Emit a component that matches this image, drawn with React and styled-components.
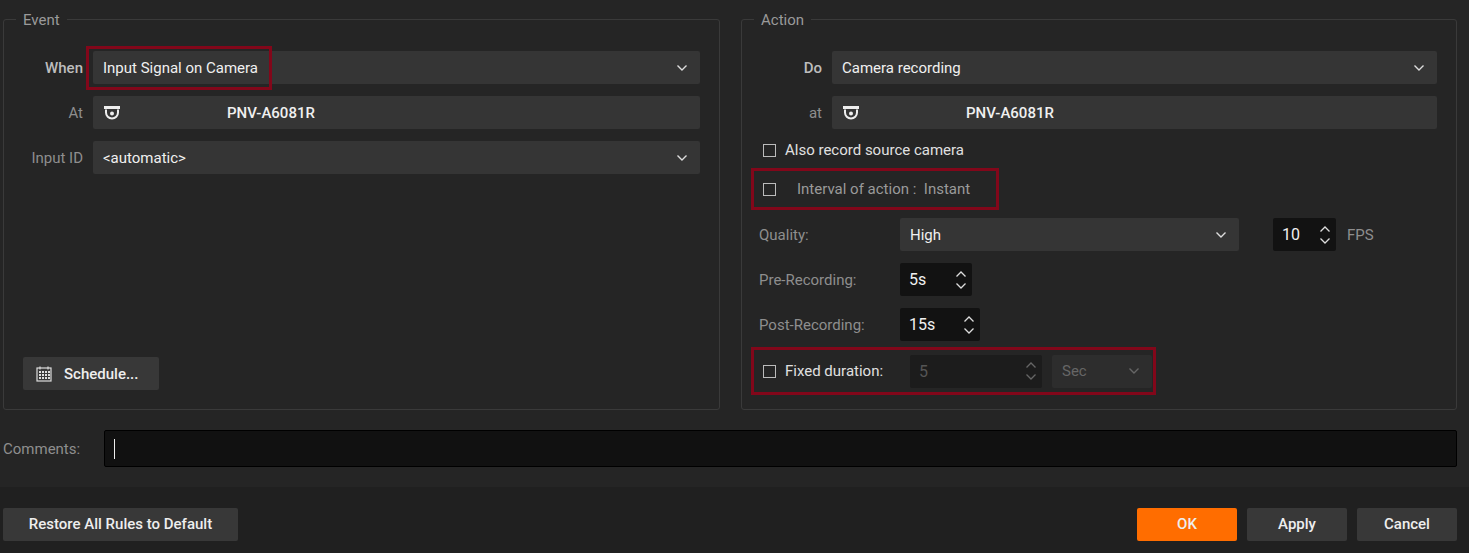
import React from "react";
import styled, { createGlobalStyle } from "styled-components";

const Global = createGlobalStyle`
  body { margin: 0; background: #252525; font-family: Roboto, "Liberation Sans", sans-serif; }
`;

const Chevron = ({ color = "#ddd" }) => (
  <svg width="12" height="8" viewBox="0 0 12 8"><path d="M1.5 1.5 6 6l4.5-4.5" fill="none" stroke={color} strokeWidth="1.4" /></svg>
);

const CameraIcon = () => (
  <svg width="18" height="16" viewBox="0 0 18 16">
    <rect x="1" y="1" width="16" height="3" fill="#eee" />
    <path d="M3 4.5v3a6 6 0 0 0 12 0v-3" fill="none" stroke="#eee" strokeWidth="2" />
    <circle cx="9" cy="8.5" r="2" fill="#eee" />
  </svg>
);

const CalendarIcon = () => (
  <svg width="18" height="18" viewBox="0 0 18 18" fill="none" stroke="#ddd" strokeWidth="1.2">
    <rect x="2" y="3" width="14" height="13" />
    <path d="M5 1.5v3M13 1.5v3" />
    <g fill="#ddd" stroke="none">
      {[6, 9, 12].map((y) => [5, 8, 11, 14].map((x) => <rect key={x + "-" + y} x={x - 1} y={y} width="2" height="2" />))}
    </g>
  </svg>
);

const SpinArrows = ({ dim }) => (
  <Arrows>
    <svg width="12" height="8" viewBox="0 0 12 8"><path d="M1.5 6.5 6 2l4.5 4.5" fill="none" stroke={dim ? "#666" : "#ddd"} strokeWidth="1.3" /></svg>
    <svg width="12" height="8" viewBox="0 0 12 8"><path d="M1.5 1.5 6 6l4.5-4.5" fill="none" stroke={dim ? "#666" : "#ddd"} strokeWidth="1.3" /></svg>
  </Arrows>
);

export default function App() {
  return (
    <Page>
      <Global />
      <Groups>
        <Group>
          <Legend>Event</Legend>
          <FormGrid $label="60px">
            <Label $bold>When</Label>
            <Select>
              <Highlight>Input Signal on Camera</Highlight>
              <Chevron />
            </Select>
            <Label>At</Label>
            <Field>
              <CameraIcon />
              <Centered>PNV-A6081R</Centered>
            </Field>
            <Label>Input ID</Label>
            <Select>
              <span>&lt;automatic&gt;</span>
              <Chevron />
            </Select>
          </FormGrid>
          <Spacer />
          <Button $w="136px">
            <CalendarIcon />
            Schedule...
          </Button>
        </Group>

        <Group>
          <Legend>Action</Legend>
          <FormGrid $label="61px">
            <Label $bold>Do</Label>
            <Select>
              <span>Camera recording</span>
              <Chevron />
            </Select>
            <Label>at</Label>
            <Field>
              <CameraIcon />
              <Centered>PNV-A6081R</Centered>
            </Field>
          </FormGrid>
          <Options>
            <Check>
              <Box />
              Also record source camera
            </Check>
            <RedBox $w="248px" $h="42px">
              <Check $dim>
                <Box />
                <IntervalText>Interval of action :&nbsp;&nbsp;Instant</IntervalText>
              </Check>
            </RedBox>
            <RecGrid>
              <SubLabel>Quality:</SubLabel>
              <Row>
                <Select $w="339px">
                  <span>High</span>
                  <Chevron />
                </Select>
                <Spin $w="63px" $ml="23px">10<SpinArrows /></Spin>
                <SubLabel>FPS</SubLabel>
              </Row>
              <SubLabel>Pre-Recording:</SubLabel>
              <Row><Spin $w="72px">5s<SpinArrows /></Spin></Row>
              <SubLabel>Post-Recording:</SubLabel>
              <Row><Spin $w="80px">15s<SpinArrows /></Spin></Row>
            </RecGrid>
            <RedBox $w="405px" $h="48px">
              <Check $w="137px">
                <Box />
                Fixed duration:
              </Check>
              <Spin $w="132px" $dim>5<SpinArrows dim /></Spin>
              <Select $w="100px" $dim>
                <span>Sec</span>
                <Chevron color="#666" />
              </Select>
            </RedBox>
          </Options>
        </Group>
      </Groups>

      <CommentRow>
        <SubLabel>Comments:</SubLabel>
        <CommentInput><Caret /></CommentInput>
      </CommentRow>

      <Footer>
        <Button $w="235px" $center>Restore All Rules to Default</Button>
        <Grow />
        <Button $w="100px" $center $primary>OK</Button>
        <Button $w="100px" $center>Apply</Button>
        <Button $w="100px" $center>Cancel</Button>
      </Footer>
    </Page>
  );
}

const Page = styled.div`
  width: 1469px;
  height: 553px;
  background: #252525;
  color: #e8e8e8;
  font-size: 15px;
  display: flex;
  flex-direction: column;
`;

const Groups = styled.div`
  display: grid;
  grid-template-columns: 717px 716px;
  gap: 21px;
  padding: 19px 12px 0 3px;
`;

const Group = styled.div`
  position: relative;
  border: 1px solid #3a3a3a;
  border-radius: 3px;
  height: 391px;
  box-sizing: border-box;
  padding: 31px 19px 19px 19px;
  display: flex;
  flex-direction: column;
`;

const Legend = styled.div`
  position: absolute;
  top: -9px;
  left: 12px;
  padding: 0 7px;
  background: #252525;
  color: #9a9a9a;
  font-size: 15px;
`;

const FormGrid = styled.div`
  display: grid;
  grid-template-columns: ${({ $label }) => $label} 1fr;
  column-gap: 10px;
  row-gap: 12px;
  grid-auto-rows: 33px;
`;

const Label = styled.div`
  display: flex;
  align-items: center;
  justify-content: flex-end;
  color: ${({ $bold }) => ($bold ? "#bdbdbd" : "#8e8e8e")};
  font-weight: ${({ $bold }) => ($bold ? 500 : 400)};
  white-space: nowrap;
`;

const Select = styled.div`
  display: flex;
  flex-shrink: 0;
  align-items: center;
  justify-content: space-between;
  background: ${({ $dim }) => ($dim ? "#2d2d2d" : "#353535")};
  color: ${({ $dim }) => ($dim ? "#666" : "#f0f0f0")};
  border-radius: 2px;
  padding: 0 12px 0 10px;
  height: 33px;
  width: ${({ $w }) => $w || "auto"};
  box-sizing: border-box;
  position: relative;
`;

const Highlight = styled.span`
  position: relative;
  &::before {
    content: "";
    position: absolute;
    inset: -13px -14px -13px -17px;
    border: 3px solid #82071a;
  }
`;

const Field = styled(Select)`
  justify-content: flex-start;
`;

const Centered = styled.span`
  margin-left: 106px;
  font-weight: 500;
`;

const IntervalText = styled.span`
  margin-left: 12px;
`;

const Spacer = styled.div`
  flex: 1;
`;

const Button = styled.div`
  display: flex;
  flex-shrink: 0;
  align-items: center;
  justify-content: ${({ $center }) => ($center ? "center" : "flex-start")};
  gap: 11px;
  padding: ${({ $center }) => ($center ? "0" : "0 12px")};
  width: ${({ $w }) => $w};
  height: 33px;
  box-sizing: border-box;
  border-radius: 2px;
  background: ${({ $primary }) => ($primary ? "#ff6d00" : "#383838")};
  color: #eee;
  font-weight: 500;
`;

const Options = styled.div`
  display: flex;
  flex-direction: column;
  padding-left: 2px;
  margin-top: 9px;
`;

const Check = styled.div`
  display: flex;
  flex-shrink: 0;
  align-items: center;
  gap: 9px;
  width: ${({ $w }) => $w || "auto"};
  color: ${({ $dim }) => ($dim ? "#9a9a9a" : "#e0e0e0")};
  height: 24px;
`;

const Box = styled.span`
  width: 11px;
  height: 11px;
  border: 1px solid #bbb;
  display: inline-block;
`;

const RedBox = styled.div`
  display: flex;
  align-items: center;
  gap: 10px;
  margin-left: -12px;
  padding-left: 9px;
  width: ${({ $w }) => $w};
  height: ${({ $h }) => $h};
  box-sizing: border-box;
  border: 3px solid #82071a;
  margin-top: 6px;
`;

const RecGrid = styled.div`
  display: grid;
  grid-template-columns: 141px 1fr;
  grid-auto-rows: 33px;
  row-gap: 12px;
  margin-top: 8px;
  margin-left: -4px;
`;

const SubLabel = styled.div`
  display: flex;
  align-items: center;
  color: #8e8e8e;
  white-space: nowrap;
`;

const Row = styled.div`
  display: flex;
  align-items: center;
  gap: 11px;
`;

const Spin = styled.div`
  display: flex;
  flex-shrink: 0;
  align-items: center;
  justify-content: space-between;
  height: 33px;
  width: ${({ $w }) => $w};
  margin-left: ${({ $ml }) => $ml || 0};
  box-sizing: border-box;
  padding: 0 5px 0 9px;
  background: ${({ $dim }) => ($dim ? "#1c1c1c" : "#121212")};
  color: ${({ $dim }) => ($dim ? "#555" : "#f0f0f0")};
  font-size: 16px;
  border-radius: 2px;
`;

const Arrows = styled.div`
  display: flex;
  flex-direction: column;
  gap: 4px;
`;

const CommentRow = styled.div`
  display: flex;
  align-items: center;
  gap: 24px;
  padding: 20px 12px 0 3px;
`;

const CommentInput = styled.div`
  flex: 1;
  height: 35px;
  background: #111;
  border: 1px solid #000;
  border-radius: 2px;
  display: flex;
  align-items: center;
  padding-left: 9px;
`;

const Caret = styled.span`
  width: 1px;
  height: 20px;
  background: #eee;
`;

const Footer = styled.div`
  margin-top: 20px;
  flex: 1;
  background: #202020;
  display: flex;
  align-items: center;
  gap: 10px;
  padding: 8px 12px 0 3px;
`;

const Grow = styled.div`
  flex: 1;
`;
